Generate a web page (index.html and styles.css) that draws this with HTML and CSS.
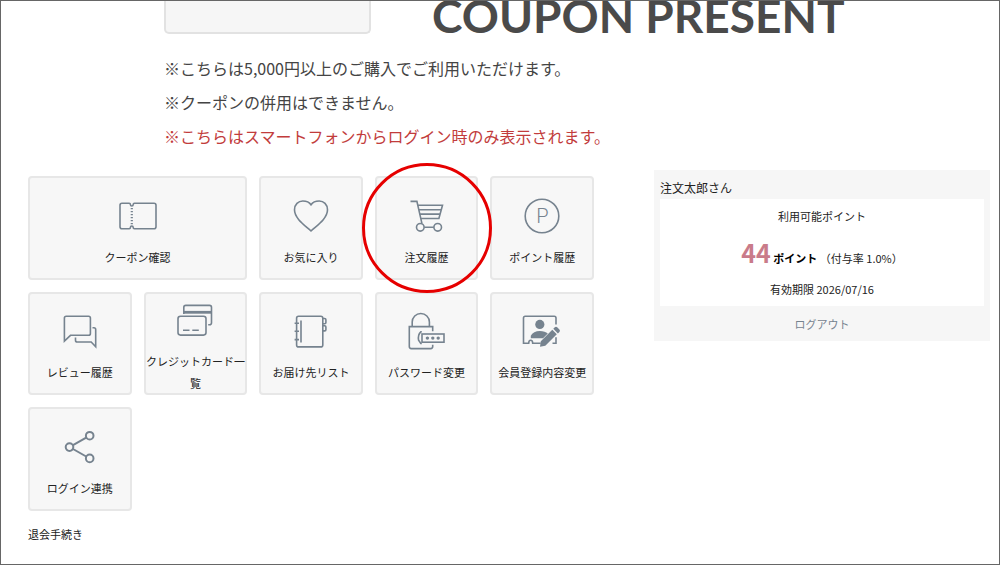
FILE: index.html
```
<!DOCTYPE html>
<html lang="ja">
<head>
  <meta charset="UTF-8">
  <meta name="viewport" content="width=device-width, initial-scale=1">
  <title>マイページ</title>
  <link rel="stylesheet" href="styles.css">
</head>
<body>
  <section class="coupon">
    <div class="coupon-head">
      <div class="coupon-image"></div>
      <h1>COUPON PRESENT</h1>
    </div>
    <div class="coupon-notes">
      <p>※こちらは5,000円以上のご購入でご利用いただけます。</p>
      <p>※クーポンの併用はできません。</p>
      <p class="alert">※こちらはスマートフォンからログイン時のみ表示されます。</p>
    </div>
  </section>

  <div class="container">
    <main class="mypage">
      <nav class="menu">
        <a href="#" class="menu-item wide">
          <svg class="icon" viewBox="0 0 40 40">
            <path d="M4 7.2h7.2q1.2 0 1.2 1.2 0 1.6 1.4 1.6t1.4-1.6q0-1.2 1.2-1.2H36q2 0 2 2v21.600q0 2-2 2H16.400q-1.200 0-1.200-1.200 0-1.600-1.400-1.600t-1.400 1.600q0 1.200-1.200 1.200H4q-2 0-2-2V9.200q0-2 2-2z"/>
            <path d="M13.800 12v17" stroke-width="2.200" stroke-dasharray="1.300 1.700"/>
          </svg>
          <span>クーポン確認</span>
        </a>
        <a href="#" class="menu-item">
          <svg class="icon" viewBox="0 0 40 40">
            <path d="M20 35C14 29.500 3.500 22.500 3.500 13.800 3.500 8.500 7.300 5 11.800 5c3.500 0 6.500 1.200 8.200 3.800C21.700 6.200 24.700 5 28.200 5c4.500 0 8.300 3.500 8.300 8.800C36.500 22.500 26 29.500 20 35z"/>
          </svg>
          <span>お気に入り</span>
        </a>
        <a href="#" class="menu-item current">
          <svg class="icon" viewBox="0 0 40 40">
            <path d="M3.500 5.400h6.400l5 22M11 9.200h24.500l-3.600 13.300H14M12 13.700h22M13 18.100h20M17.300 31.300h9.600"/>
            <circle cx="13.300" cy="31.300" r="3.800"/>
            <circle cx="30.700" cy="31.300" r="3.800"/>
          </svg>
          <span>注文履歴</span>
        </a>
        <a href="#" class="menu-item">
          <svg class="icon" viewBox="0 0 40 40">
            <circle cx="20" cy="20" r="16.800"/>
            <text x="20.500" y="27" class="point-mark">P</text>
          </svg>
          <span>ポイント履歴</span>
        </a>
        <a href="#" class="menu-item">
          <svg class="icon" viewBox="0 0 40 40">
            <path d="M4.400 30.200V7q0-1.800 1.800-1.800h22.400q1.800 0 1.800 1.800v15.500q0 1.800-1.800 1.800H10.500z"/>
            <path d="M15.500 26.600v2.600q0 1.800 1.800 1.800h13.900l4.500 4.700V18.500q0-1.800-1.800-1.800h-1.400"/>
          </svg>
          <span>レビュー履歴</span>
        </a>
        <a href="#" class="menu-item">
          <svg class="icon" viewBox="0 0 40 40">
            <path d="M8.800 14V7.400q0-2 2-2h23.700q2 0 2 2v15.400q0 2-2 2h-1.300"/>
            <path d="M9 12.300h27.500" stroke-width="2.800"/>
            <rect x="3" y="16.300" width="28" height="18.800" rx="2.500"/>
            <path d="M8 30.200h6.500M17.300 30.200h6.500"/>
          </svg>
          <span>クレジットカード一覧</span>
        </a>
        <a href="#" class="menu-item">
          <svg class="icon" viewBox="0 0 40 40">
            <rect x="5.600" y="5.300" width="26.200" height="30.600" rx="2"/>
            <path d="M10 9.500v22M3.600 12.200H8M3.600 20.300H8M3.600 28.600H8"/>
            <path d="M31.800 7.500h1.900q1.200 0 1.200 1.200v2.800q0 1.200-1.200 1.200h-1.900M31.800 14.700h1.900q1.200 0 1.200 1.200v2.800q0 1.200-1.200 1.200h-1.900"/>
          </svg>
          <span>お届け先リスト</span>
        </a>
        <a href="#" class="menu-item">
          <svg class="icon" viewBox="0 0 40 40">
            <path d="M5.200 15.400v-4.300a8.600 8.600 0 0 1 17.200 0v4.300"/>
            <path d="M25.700 20.300v-4.700H2.300v20q0 2 2 2h19.400q2 0 2-2v-1.800"/>
            <rect x="15" y="23" width="22" height="8.200"/>
            <path d="M14.800 20.800h-1q-3.200 3-2.200 8.500l2.200 3.200h1"/>
            <g class="solid">
              <circle cx="20.400" cy="27.100" r="1.700"/>
              <circle cx="25.800" cy="27.100" r="1.700"/>
              <circle cx="31.200" cy="27.100" r="1.700"/>
            </g>
          </svg>
          <span>パスワード変更</span>
        </a>
        <a href="#" class="menu-item">
          <svg class="icon" viewBox="0 0 40 40">
            <path d="M34 13.500V7q0-1.700-1.700-1.700H3.200Q1.500 5.300 1.500 7v25.300h5.200q0-3 2-3t2 3h8M30.500 32.300H34v-6"/>
            <g class="solid">
              <circle cx="17.800" cy="13.400" r="4.600"/>
              <path d="M8.800 27.300v-2.600c1.500-3 5-4.800 9-4.800 3.600 0 6.200 1 8 2.600l-4.800 4.800zM18 35.800l.8-5.500L30.300 18.800l4.500 4.500L23.300 34.800zM31.300 17.800l1.500-1.500q1.200-1.200 2.400 0l2.200 2.200q1.200 1.200 0 2.400l-1.500 1.500z"/>
            </g>
          </svg>
          <span>会員登録内容変更</span>
        </a>
        <a href="#" class="menu-item">
          <svg class="icon" viewBox="0 0 40 40">
            <g stroke-width="2">
              <path d="M13 18.200l13.200-7.600M13 22l13.200 7.500"/>
              <circle cx="9.500" cy="20.100" r="3.800"/>
              <circle cx="29.700" cy="8.700" r="3.800"/>
              <circle cx="29.700" cy="31.400" r="3.800"/>
            </g>
          </svg>
          <span>ログイン連携</span>
        </a>
      </nav>
      <a href="#" class="withdraw">退会手続き</a>
    </main>

    <aside class="member">
      <p class="member-name">注文太郎さん</p>
      <div class="point-box">
        <p>利用可能ポイント</p>
        <p class="point"><strong><span class="point-num">44</span> ポイント</strong> （付与率 1.0%）</p>
        <p>有効期限 2026/07/16</p>
      </div>
      <a href="#" class="logout">ログアウト</a>
    </aside>
  </div>
</body>
</html>
```
FILE: styles.css
```
* {
  box-sizing: border-box;
}

body {
  margin: 0;
  min-height: 100vh;
  border: 1px solid #666;
  background-color: #fff;
  color: #222;
  font-family: "Noto Sans CJK JP", sans-serif;
  font-size: 11px;
  line-height: 22px;
}

p {
  margin: 0;
}

a {
  color: inherit;
  text-decoration: none;
}

/* クーポン */
.coupon {
  padding-left: 163px;
}

.coupon-head {
  display: flex;
  align-items: flex-end;
  gap: 61px;
}

.coupon-image {
  width: 207px;
  height: 33px;
  border: 2px solid #e2e2e2;
  border-top: none;
  border-radius: 0 0 5px 5px;
  background-color: #f6f6f6;
}

.coupon-head h1 {
  margin: 0;
  color: #4a4a4a;
  font-family: Lato, sans-serif;
  font-size: 46px;
  font-weight: 700;
  line-height: 30px;
  padding-bottom: 3px;
  white-space: nowrap;
}

.coupon-notes {
  margin-top: 17px;
  color: #444;
  font-size: 16px;
  line-height: 34px;
}

.coupon-notes .alert {
  color: #c23c3c;
}

.container {
  display: grid;
  grid-template-columns: minmax(0, 1fr) 336px;
  gap: 60px;
  align-items: start;
  padding: 17px 9px 18px 27px;
}

/* メニュー */
.menu {
  display: grid;
  grid-template-columns: repeat(5, minmax(0, 1fr));
  gap: 12px;
  margin-top: 6px;
}

.menu-item {
  position: relative;
  display: flex;
  flex-direction: column;
  align-items: center;
  justify-content: center;
  aspect-ratio: 1;
  min-width: 0;
  min-height: 0;
  border: 2px solid #e7e7e7;
  border-radius: 4px;
  background-color: #f7f7f7;
  text-align: center;
}

.menu-item.wide {
  grid-column: span 2;
  aspect-ratio: auto;
}

/* 選択中の丸囲み */
.menu-item.current::after {
  content: "";
  position: absolute;
  top: 50%;
  left: 50%;
  width: 124px;
  height: 124px;
  border: 3px solid #e60000;
  border-radius: 50%;
  transform: translate(-50%, -50%);
  z-index: 1;
  pointer-events: none;
}

.icon {
  width: 40px;
  height: 40px;
  margin: 8px 0 10px;
  flex-shrink: 0;
  fill: none;
  stroke: #76838f;
  stroke-width: 1.6;
}

.icon .solid {
  fill: #76838f;
  stroke: none;
}

.icon .point-mark {
  fill: #76838f;
  stroke: none;
  font-family: Roboto, sans-serif;
  font-size: 20px;
  font-weight: 300;
  text-anchor: middle;
}

.withdraw {
  display: inline-block;
  margin-top: 12px;
}

/* 会員情報 */
.member {
  padding: 7px 6px 6px;
  background-color: #f6f6f6;
  text-align: center;
}

.member-name {
  font-size: 12px;
  text-align: left;
}

.point-box {
  padding: 6px 0;
  background-color: #fff;
}

.point {
  margin: 10px 0 5px;
  line-height: 30px;
}

.point strong {
  color: #000;
}

.point-num {
  color: #c97b8a;
  font-size: 25px;
}

.logout {
  display: block;
  margin-top: 7px;
  color: #76838f;
}
```
